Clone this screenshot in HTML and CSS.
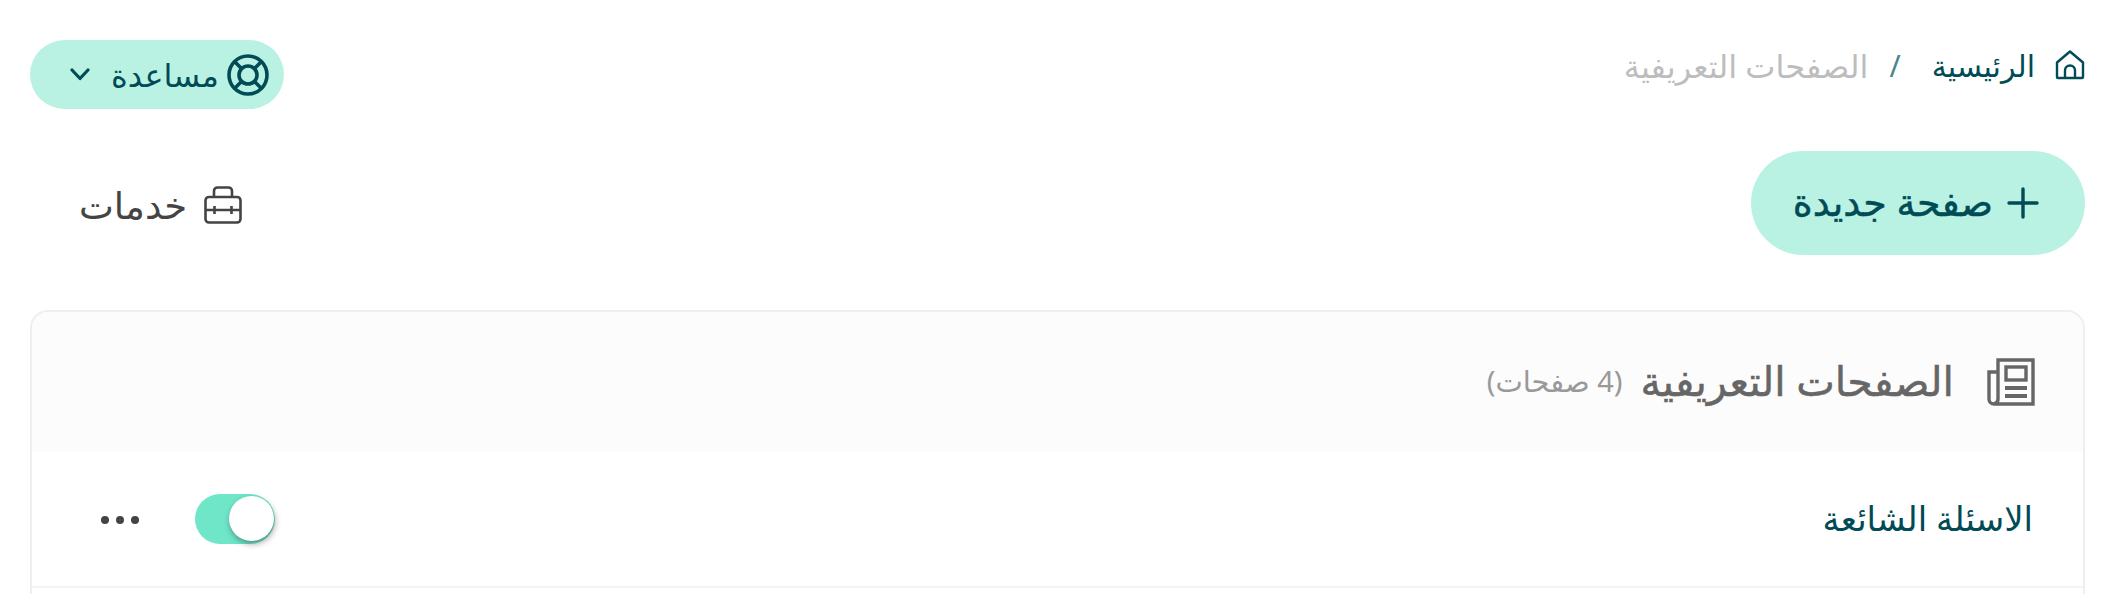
FILE: index.html
```html
<!DOCTYPE html>
<html lang="ar" dir="rtl">
<head>
<meta charset="utf-8">
<title>الصفحات التعريفية</title>
<link rel="stylesheet" href="styles.css">
</head>
<body>
<div class="page">
  <div class="topbar">
    <nav class="crumbs">
      <svg class="home" viewBox="0 0 30 30" fill="none" stroke="currentColor" stroke-width="2.4" stroke-linejoin="round"><path d="M2 12.5 15 1.5l13 11V27a1 1 0 0 1-1 1H3a1 1 0 0 1-1-1z"/><path d="M10 28v-7.5a5 5 0 0 1 10 0V28"/></svg>
      <a class="crumb-home">الرئيسية</a>
      <span class="crumb-sep">/</span>
      <span class="crumb-cur">الصفحات التعريفية</span>
    </nav>
    <button class="help">
      <svg class="help-ico" viewBox="0 0 42 42" fill="none" stroke="currentColor" stroke-width="3.6"><circle cx="21" cy="21" r="19"/><circle cx="21" cy="21" r="9"/><path d="M7.5 7.5l7 7M27.5 14.5l7-7M27.5 27.5l7 7M14.5 27.5l-7 7"/></svg>
      <span>مساعدة</span>
      <svg class="chev" viewBox="0 0 20 13" fill="none" stroke="currentColor" stroke-width="3.2" stroke-linecap="round" stroke-linejoin="round"><path d="M2 2l8 8.5L18 2"/></svg>
    </button>
  </div>
  <div class="actions">
    <button class="new">
      <svg class="plus" viewBox="0 0 32 32" fill="none" stroke="currentColor" stroke-width="3.4" stroke-linecap="round"><path d="M16 2v28M2 16h28"/></svg>
      <span class="new-label">صفحة جديدة</span>
    </button>
    <div class="tab">
      <svg class="case" viewBox="0 0 38 38" fill="none" stroke="currentColor" stroke-width="2.6" stroke-linejoin="round"><rect x="1.5" y="11" width="35" height="25.5" rx="3.5"/><path d="M10 11V5a3.5 3.5 0 0 1 3.5-3.5h11A3.5 3.5 0 0 1 28 5v6M1.5 24h35M10.5 20v8M27.5 20v8"/></svg>
      <span>خدمات</span>
    </div>
  </div>
  <section class="card">
    <header class="card-head">
      <svg class="news" viewBox="0 0 48 48" fill="none" stroke="currentColor" stroke-width="3.4"><path d="M11 2h35v44H7a5 5 0 0 1-5-5V14h9zM11 14v27a5 5 0 0 1-4 5"/><rect x="19" y="9" width="20" height="13"/><path d="M18 30h22M18 38h22" stroke-width="3.8"/></svg>
      <h1>الصفحات التعريفية</h1>
      <span class="count">(4 صفحات)</span>
    </header>
    <div class="row">
      <span class="row-title">الاسئلة الشائعة</span>
      <div class="row-tools">
        <span class="toggle"><span class="knob"></span></span>
        <span class="dots"><i></i><i></i><i></i></span>
      </div>
    </div>
  </section>
</div>
</body>
</html>
```
FILE: styles.css
```css
* { box-sizing: border-box; }
html, body { margin: 0; height: 100%; overflow: hidden; background: #fff; }
body { font-family: "Noto Sans", "DejaVu Sans", sans-serif; color: #444; }
.page { padding: 40px 25px 0 30px; }
.topbar { display: flex; justify-content: space-between; align-items: flex-start; height: 70px; }
.crumbs { display: flex; align-items: center; height: 50px; }
.home { width: 30px; height: 30px; color: #004b55; margin-left: 20px; flex: none; }
.crumb-home { color: #004b55; font-size: 30px; }
.crumb-sep { color: #4a858c; font-size: 30px; margin: 0 31px 0 21px; }
.crumb-cur { color: #bdbdbd; font-size: 32px; }
.help { display: flex; align-items: center; gap: 8px; width: 254px; height: 69px; padding: 0 15px; border: 0; border-radius: 35px; background: #b9f2e3; color: #004b55; font: inherit; font-size: 32px; line-height: 1; }
.help-ico { width: 42px; height: 42px; flex: none; }
.chev { width: 20px; height: 13px; margin-right: 13px; flex: none; }
.actions { display: flex; justify-content: space-between; align-items: center; margin-top: 41px; height: 104px; }
.new { display: flex; align-items: center; width: 334px; height: 104px; padding: 0 46px 0 40px; border: 0; border-radius: 52px; background: #b9f2e3; color: #004b55; font: inherit; font-size: 38px; line-height: 1; -webkit-text-stroke: .5px #004b55; }
.new-label { padding-bottom: 4px; }
.plus { width: 32px; height: 32px; margin-left: 14px; flex: none; }
.tab { display: flex; align-items: center; margin-left: 49px; padding-top: 3px; font-size: 37px; line-height: 1; color: #444; }
.case { width: 38px; height: 38px; margin-left: 17px; flex: none; }
.card { margin-top: 55px; border: 2px solid #efefef; border-bottom: 0; border-radius: 18px 18px 0 0; width: 2055px; height: 284px; }
.card-head { display: flex; align-items: center; height: 140px; padding: 0 48px; background: #fcfcfc; border-radius: 16px 16px 0 0; }
.news { width: 48px; height: 48px; color: #666; margin-left: 33px; flex: none; }
.card-head h1 { margin: 0 0 0 18px; padding-bottom: 4px; font-size: 41px; font-weight: 400; line-height: 1; color: #666; -webkit-text-stroke: .5px #666; }
.count { padding-bottom: 4px; font-size: 29px; line-height: 1; color: #999; }
.row { display: flex; justify-content: space-between; align-items: center; height: 136px; padding: 0 50px 0 69px; border-bottom: 2px solid #f3f3f3; }
.row-title { padding-bottom: 2px; font-size: 34px; line-height: 1; color: #004b55; }
.row-tools { display: flex; align-items: center; gap: 56px; }
.toggle { position: relative; display: block; width: 80px; height: 50px; border-radius: 25px; background: #6fe6c8; }
.knob { position: absolute; top: 2px; left: 34px; width: 45px; height: 45px; border-radius: 50%; background: #fff; box-shadow: 1px 3px 6px rgba(0,0,0,.35); }
.dots { display: flex; gap: 7px; padding-top: 2px; }
.dots i { width: 8px; height: 8px; border-radius: 50%; background: #444; }
```
